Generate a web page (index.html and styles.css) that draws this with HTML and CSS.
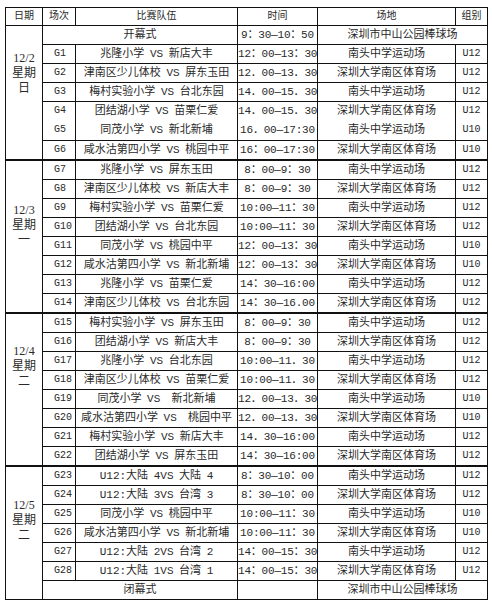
FILE: index.html
```html
<!DOCTYPE html>
<html lang="zh-CN">
<head>
<meta charset="utf-8">
<title>赛程表</title>
<link rel="stylesheet" href="styles.css">
</head>
<body>
<div class="page">
<table class="sched">
<colgroup>
<col class="c-date"><col class="c-no"><col class="c-team"><col class="c-time"><col class="c-venue"><col class="c-grp">
</colgroup>
<thead>
<tr class="hd"><th>日期</th><th>场次</th><th>比赛队伍</th><th>时间</th><th>场地</th><th>组别</th></tr>
</thead>
<tbody>
<tr><td class="date d1" rowspan="7">12/2<br>星期<br>日</td><td class="team" colspan="2">开幕式</td><td class="time">9：30—10：50</td><td class="venue" colspan="2">深圳市中山公园棒球场</td></tr>
<tr><td class="no">G1</td><td class="team">兆隆小学 VS 新店大丰</td><td class="time">12：00—13：30</td><td class="venue">南头中学运动场</td><td class="grp">U12</td></tr>
<tr><td class="no">G2</td><td class="team">津南区少儿体校 VS 屏东玉田</td><td class="time">12．00—13．30</td><td class="venue">深圳大学南区体育场</td><td class="grp">U12</td></tr>
<tr><td class="no">G3</td><td class="team">梅村实验小学 VS 台北东园</td><td class="time">14．00—15．30</td><td class="venue">南头中学运动场</td><td class="grp">U12</td></tr>
<tr class="nob"><td class="no">G4</td><td class="team">团结湖小学 VS 苗栗仁爱</td><td class="time">14．00—15．30</td><td class="venue">深圳大学南区体育场</td><td class="grp">U12</td></tr>
<tr class="tall"><td class="no">G5</td><td class="team">同茂小学 VS 新北新埔</td><td class="time">16．00—17:30</td><td class="venue">南头中学运动场</td><td class="grp">U10</td></tr>
<tr><td class="no">G6</td><td class="team">咸水沽第四小学 VS 桃园中平</td><td class="time">16：00—17:30</td><td class="venue">深圳大学南区体育场</td><td class="grp">U10</td></tr>
<tr class="day"><td class="date d2" rowspan="8">12/3<br>星期<br>一</td><td class="no">G7</td><td class="team">兆隆小学 VS 屏东玉田</td><td class="time">8：00—9：30</td><td class="venue">南头中学运动场</td><td class="grp">U12</td></tr>
<tr><td class="no">G8</td><td class="team">津南区少儿体校 VS 新店大丰</td><td class="time">8：00—9：30</td><td class="venue">深圳大学南区体育场</td><td class="grp">U12</td></tr>
<tr><td class="no">G9</td><td class="team">梅村实验小学 VS 苗栗仁爱</td><td class="time">10:00—11：30</td><td class="venue">南头中学运动场</td><td class="grp">U12</td></tr>
<tr><td class="no">G10</td><td class="team">团结湖小学 VS 台北东园</td><td class="time">10:00—11：30</td><td class="venue">深圳大学南区体育场</td><td class="grp">U12</td></tr>
<tr><td class="no">G11</td><td class="team">同茂小学 VS 桃园中平</td><td class="time">12：00—13：30</td><td class="venue">南头中学运动场</td><td class="grp">U10</td></tr>
<tr><td class="no">G12</td><td class="team">咸水沽第四小学 VS 新北新埔</td><td class="time">12：00—13：30</td><td class="venue">深圳大学南区体育场</td><td class="grp">U10</td></tr>
<tr><td class="no">G13</td><td class="team">兆隆小学 VS 苗栗仁爱</td><td class="time">14：30—16:00</td><td class="venue">南头中学运动场</td><td class="grp">U12</td></tr>
<tr><td class="no">G14</td><td class="team">津南区少儿体校 VS 台北东园</td><td class="time">14：30—16.00</td><td class="venue">深圳大学南区体育场</td><td class="grp">U12</td></tr>
<tr class="day"><td class="date d3" rowspan="8">12/4<br>星期<br>二</td><td class="no">G15</td><td class="team">梅村实验小学 VS 屏东玉田</td><td class="time">8：00—9：30</td><td class="venue">南头中学运动场</td><td class="grp">U12</td></tr>
<tr><td class="no">G16</td><td class="team">团结湖小学 VS 新店大丰</td><td class="time">8：00—9：30</td><td class="venue">深圳大学南区体育场</td><td class="grp">U12</td></tr>
<tr><td class="no">G17</td><td class="team">兆隆小学 VS 台北东园</td><td class="time">10:00—11．30</td><td class="venue">南头中学运动场</td><td class="grp">U12</td></tr>
<tr><td class="no">G18</td><td class="team">津南区少儿体校 VS 苗栗仁爱</td><td class="time">10:00—11．30</td><td class="venue">深圳大学南区体育场</td><td class="grp">U12</td></tr>
<tr><td class="no">G19</td><td class="team">同茂小学 VS&nbsp; 新北新埔</td><td class="time">12．00—13．30</td><td class="venue">南头中学运动场</td><td class="grp">U10</td></tr>
<tr><td class="no">G20</td><td class="team">咸水沽第四小学 VS&nbsp; 桃园中平</td><td class="time">12．00—13．30</td><td class="venue">深圳大学南区体育场</td><td class="grp">U10</td></tr>
<tr><td class="no">G21</td><td class="team">梅村实验小学 VS 新店大丰</td><td class="time">14．30—16:00</td><td class="venue">南头中学运动场</td><td class="grp">U12</td></tr>
<tr><td class="no">G22</td><td class="team">团结湖小学 VS 屏东玉田</td><td class="time">14：30—16:00</td><td class="venue">深圳大学南区体育场</td><td class="grp">U12</td></tr>
<tr class="day"><td class="date d4" rowspan="7">12/5<br>星期<br>二</td><td class="no">G23</td><td class="team">U12:大陆 4VS 大陆 4</td><td class="time">8：30—10：00</td><td class="venue">南头中学运动场</td><td class="grp">U12</td></tr>
<tr><td class="no">G24</td><td class="team">U12:大陆 3VS 台湾 3</td><td class="time">8：30—10：00</td><td class="venue">深圳大学南区体育场</td><td class="grp">U12</td></tr>
<tr><td class="no">G25</td><td class="team">同茂小学 VS 桃园中平</td><td class="time">10:00—11：30</td><td class="venue">南头中学运动场</td><td class="grp">U10</td></tr>
<tr><td class="no">G26</td><td class="team">咸水沽第四小学 VS 新北新埔</td><td class="time">10:00—11：30</td><td class="venue">深圳大学南区体育场</td><td class="grp">U10</td></tr>
<tr><td class="no">G27</td><td class="team">U12:大陆 2VS 台湾 2</td><td class="time">14：00—15：30</td><td class="venue">南头中学运动场</td><td class="grp">U12</td></tr>
<tr><td class="no">G28</td><td class="team">U12:大陆 1VS 台湾 1</td><td class="time">14：00—15：30</td><td class="venue">深圳大学南区体育场</td><td class="grp">U12</td></tr>
<tr><td class="team" colspan="2">闭幕式</td><td class="time"></td><td class="venue" colspan="2">深圳市中山公园棒球场</td></tr>
</tbody>
</table>
</div>
</body>
</html>
```
FILE: styles.css
```css
html, body {
  margin: 0;
  padding: 0;
  background: #ffffff;
}
.page {
  padding: 7px 0 0 5px;
}
.sched {
  border-collapse: collapse;
  table-layout: fixed;
  width: 482px;
  font-family: "Liberation Mono", "Noto Sans CJK SC", monospace;
  font-size: 11px;
  color: #2a2a2a;
}
.c-date { width: 37px; }
.c-no { width: 33px; }
.c-team { width: 162px; }
.c-time { width: 80px; }
.c-venue { width: 138px; }
.c-grp { width: 32px; }
.sched th, .sched td {
  border: 1px solid #111;
  padding: 0;
  height: 18px;
  line-height: 14px;
  text-align: center;
  vertical-align: middle;
  white-space: nowrap;
  overflow: hidden;
  font-weight: normal;
}
.sched th {
  font-size: 10px;
  height: 17px;
}
.sched .no {
  text-align: left;
  padding-left: 11px;
  font-size: 10px;
}
.sched .grp {
  font-size: 10px;
}
.sched .team {
  word-spacing: -1px;
}
.sched .date {
  font-family: "Liberation Serif", "Noto Sans CJK SC", serif;
  font-size: 12px;
  line-height: 15px;
}
.sched .d1 { padding-bottom: 38px; }
.sched .d2 { padding-bottom: 22px; }
.sched .d3 { padding-bottom: 46px; }
.sched .d4 { padding-bottom: 26px; }
.sched tr.day td { border-top: 2px solid #111; }
.sched tr.nob td { border-bottom: none; }
.sched tr.nob + tr td { border-top: none; }
.sched tr.tall td { height: 20px; }
.sched .time { letter-spacing: -0.2px; }
```
